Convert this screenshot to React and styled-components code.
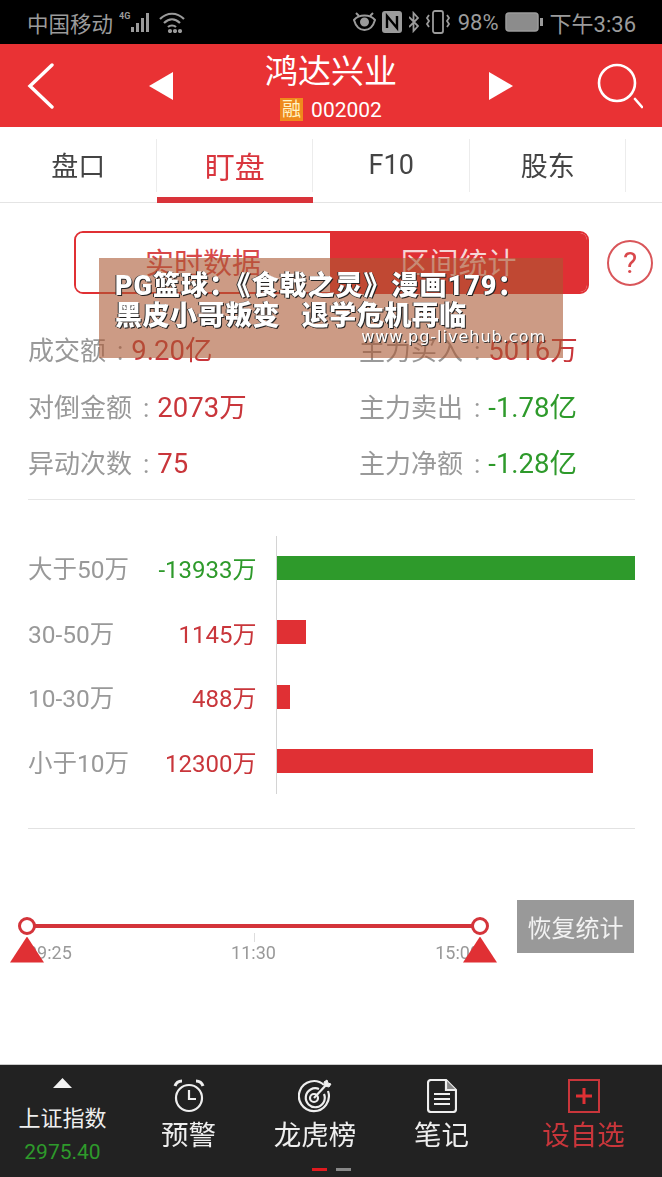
import React from 'react';
import styled, {createGlobalStyle} from 'styled-components';

const RED = '#e93234';
const BAR_RED = '#e03034';
const GREEN = '#2e9a2b';
const GREY = '#999';

const GlobalStyle = createGlobalStyle`
  html, body {
    margin: 0;
    padding: 0;
    background: #fff;
  }
  * {
    box-sizing: border-box;
  }
  body {
    font-family: Roboto, "Noto Sans CJK SC", sans-serif;
  }
`;

const Page = styled.div`
  position: relative;
  width: 662px;
  height: 1177px;
  overflow: hidden;
  display: flex;
  flex-direction: column;
  filter: blur(0.5px);
`;

const StatusBar = styled.div`
  height: 44px;
  background: #000;
  color: #9b9b9b;
  display: flex;
  align-items: center;
  justify-content: space-between;
  padding: 0 26px 0 27px;
  font-size: 21.5px;
`;

const StatusGroup = styled.div`
  display: flex;
  align-items: center;
  font-size: ${props => props.$size || 21.5}px;
  gap: ${props => props.$gap || 6}px;
`;

const Header = styled.div`
  height: 83px;
  background: ${RED};
  color: #fff;
  display: flex;
  align-items: center;
  justify-content: space-between;
  padding: 0 19px 0 27px;
`;

const HeaderMiddle = styled.div`
  display: flex;
  align-items: center;
  justify-content: space-between;
  width: 364px;
  margin-left: 11px;
`;

const TitleBlock = styled.div`
  display: flex;
  flex-direction: column;
  align-items: center;
`;

const Title = styled.div`
  font-size: 33px;
  line-height: 44px;
  margin-top: 2px;
`;

const CodeRow = styled.div`
  display: flex;
  align-items: center;
  gap: 8px;
  font-size: 21px;
  line-height: 28px;
  margin-top: 2px;
`;

const Badge = styled.span`
  width: 23px;
  height: 23px;
  background: #ef8a1c;
  color: #fff3c4;
  font-size: 19px;
  line-height: 23px;
  text-align: center;
`;

const Tabs = styled.div`
  height: 76px;
  display: flex;
  border-bottom: 1px solid #e4e4e4;
  padding-right: 36px;
`;

const Tab = styled.div`
  position: relative;
  width: 156.5px;
  height: 75px;
  display: flex;
  align-items: center;
  justify-content: center;
  font-size: ${props => (props.$active ? 30 : 27)}px;
  color: ${props => (props.$active ? '#d9363e' : '#444')};
  &::before {
    content: '';
    position: absolute;
    right: 0;
    top: 12px;
    bottom: 10px;
    width: 1px;
    background: #ececec;
  }
  ${props => props.$active && `
    &::after {
      content: '';
      position: absolute;
      left: 0;
      right: 0;
      bottom: -1px;
      height: 6px;
      background: #d9333a;
    }
  `}
`;

const ModeRow = styled.div`
  display: flex;
  align-items: center;
  padding: 28px 9px 0 74px;
  gap: 18px;
`;

const Toggle = styled.div`
  width: 515px;
  height: 63px;
  display: flex;
  border: 2px solid ${BAR_RED};
  border-radius: 9px;
  overflow: hidden;
`;

const ToggleItem = styled.div`
  flex: ${props => (props.$active ? 1 : '0 0 254px')};
  display: flex;
  align-items: center;
  justify-content: center;
  padding-bottom: 3px;
  font-size: 29px;
  background: ${props => (props.$active ? BAR_RED : '#fff')};
  color: ${props => (props.$active ? '#f6d5d5' : '#d8484a')};
`;

const Help = styled.div`
  width: 46px;
  height: 46px;
  border: 2px solid #d9565a;
  border-radius: 50%;
  color: #d9484c;
  font-size: 30px;
  line-height: 42px;
  text-align: center;
`;

const Stats = styled.div`
  margin: 26px 27px 0 28px;
  padding-bottom: 9px;
  border-bottom: 1px solid #e6e6e6;
`;

const StatRow = styled.div`
  display: grid;
  grid-template-columns: 331px 1fr;
  height: 56.5px;
  align-items: center;
`;

const Stat = styled.div`
  font-size: 26px;
  color: ${GREY};
  white-space: nowrap;
`;

const Colon = styled.span`
  margin: 0 8px 0 11px;
`;

const StatValue = styled.span`
  font-size: 27.5px;
  color: ${props => (props.$down ? GREEN : '#c9363b')};
`;

const Chart = styled.div`
  margin: 36px 27px 0 28px;
  padding-bottom: 34px;
  border-bottom: 1px solid #e2e2e2;
`;

const ChartRow = styled.div`
  height: 64.5px;
  display: flex;
  align-items: center;
`;

const ChartLabel = styled.div`
  width: 110px;
  font-size: 24.5px;
  color: ${GREY};
  white-space: nowrap;
`;

const ChartValue = styled.div`
  width: 118.5px;
  text-align: right;
  font-size: 24px;
  color: ${props => (props.$down ? GREEN : '#c9363b')};
  white-space: nowrap;
`;

const Track = styled.div`
  flex: 1;
  align-self: stretch;
  margin-left: 19.5px;
  border-left: 1px solid #d4d4d4;
  display: flex;
  align-items: center;
`;

const Bar = styled.div`
  height: 24px;
  background: ${props => (props.$down ? GREEN : BAR_RED)};
`;

const RangeRow = styled.div`
  display: flex;
  align-items: flex-start;
  margin-top: 71px;
  padding-left: 27px;
`;

const Range = styled.div`
  position: relative;
  width: 453px;
  height: 65px;
  margin-right: 37px;
`;

const RangeLine = styled.div`
  position: absolute;
  left: 0;
  right: 0;
  top: 24px;
  height: 4px;
  background: #d4343a;
`;

const RangeTick = styled.div`
  position: absolute;
  left: 227px;
  top: 33px;
  width: 1px;
  height: 9px;
  background: #ddd;
`;

const Knob = styled.div`
  position: absolute;
  top: 17px;
  ${props => (props.$right ? 'right: -9px;' : 'left: -9px;')}
  width: 18px;
  height: 18px;
  border: 3px solid #d4343a;
  border-radius: 50%;
  background: #fff;
`;

const Handle = styled.div`
  position: absolute;
  top: 37px;
  ${props => (props.$right ? 'right: -17px;' : 'left: -17px;')}
  width: 34px;
  height: 26px;
  background: ${BAR_RED};
  clip-path: polygon(50% 0, 100% 100%, 0 100%);
`;

const RangeTimes = styled.div`
  position: absolute;
  left: 0;
  right: 0;
  top: 41px;
  display: flex;
  justify-content: space-between;
  font-size: 18px;
  line-height: 24px;
  color: ${GREY};
`;

const RestoreButton = styled.div`
  width: 117px;
  height: 53px;
  background: #999;
  color: #f2f2f2;
  font-size: 24px;
  display: flex;
  align-items: center;
  justify-content: center;
  white-space: nowrap;
`;

const Spacer = styled.div`
  flex: 1;
`;

const BottomBar = styled.div`
  position: relative;
  height: 113px;
  background: #222;
  border-top: 1px solid #ccc;
  display: flex;
`;

const IndexItem = styled.div`
  width: 125px;
  display: flex;
  flex-direction: column;
  align-items: center;
  color: #eee;
`;

const IndexArrow = styled.div`
  width: 19px;
  height: 10px;
  margin-top: 13px;
  background: #f2f2f2;
  clip-path: polygon(50% 0, 100% 100%, 0 100%);
`;

const IndexName = styled.div`
  font-size: 22px;
  line-height: 30px;
  margin-top: 16px;
`;

const IndexValue = styled.div`
  font-size: 21px;
  line-height: 28px;
  margin-top: 4px;
  color: ${GREEN};
`;

const NavItem = styled.div`
  width: ${props => props.$width}px;
  display: flex;
  flex-direction: column;
  align-items: center;
  padding-top: 14px;
  color: ${props => (props.$accent ? '#c9363b' : '#eee')};
  font-size: 27.5px;
  line-height: 38px;
  gap: 4px;
`;

const Pager = styled.div`
  position: absolute;
  left: 312px;
  bottom: 6px;
  display: flex;
  gap: 9px;
`;

const PagerDot = styled.div`
  width: 15px;
  height: 3px;
  background: ${props => (props.$active ? '#e01a1f' : '#888')};
`;

const Notice = styled.div`
  position: absolute;
  left: 99px;
  top: 258px;
  width: 464px;
  height: 100px;
  background: rgba(170, 88, 52, 0.6);
  padding: 13px 0 0 16px;
  color: #fff;
  font-weight: 900;
  font-size: 27px;
  line-height: 30px;
  text-shadow: 1px 1px 0 #222, -1px 0 0 #333;
`;

const NoticeLine = styled.div`
  white-space: pre;
  letter-spacing: ${props => props.$spacing || 0}px;
`;

const NoticeUrl = styled.div`
  position: absolute;
  right: 17px;
  bottom: 11px;
  font-family: "DejaVu Sans", sans-serif;
  font-weight: 400;
  font-size: 16px;
  line-height: 20px;
  letter-spacing: 1px;
  text-shadow: 1px 1px 0 #333;
`;

const SignalIcon = () => (
  <svg width="34" height="22" viewBox="0 0 34 22" fill="#9b9b9b">
    <text x="0" y="8" fontSize="9" fontFamily="Roboto" fontWeight="700">4G</text>
    <rect x="12" y="16" width="3" height="5" />
    <rect x="17" y="12" width="3" height="9" />
    <rect x="22" y="7" width="3" height="14" />
    <rect x="27" y="2" width="3" height="19" />
  </svg>
);

const WifiIcon = () => (
  <svg width="26" height="22" viewBox="0 0 26 22" fill="none" stroke="#9b9b9b" strokeWidth="2.2">
    <path d="M1 8 C8 1 18 1 25 8" />
    <path d="M5 12 C10 7 16 7 21 12" />
    <path d="M9 16 C11 14 15 14 17 16" />
    <circle cx="11" cy="20" r="1" fill="#9b9b9b" />
    <circle cx="16" cy="20" r="1" fill="#9b9b9b" />
    <circle cx="21" cy="20" r="1" fill="#9b9b9b" />
  </svg>
);

const EyeIcon = () => (
  <svg width="23" height="20" viewBox="0 0 23 20" fill="none" stroke="#9b9b9b" strokeWidth="2">
    <path d="M1 8 C6 2 17 2 22 8 C20 15 16 18 11.5 18 C7 18 3 15 1 8 Z" />
    <circle cx="11.5" cy="10" r="3.5" fill="#9b9b9b" />
    <path d="M3 1 L6 4 M20 1 L17 4" />
  </svg>
);

const NfcIcon = () => (
  <svg width="20" height="22" viewBox="0 0 20 22">
    <rect x="0" y="0" width="20" height="22" rx="3" fill="#9b9b9b" />
    <path d="M5 17 V5 L15 17 V5" fill="none" stroke="#000" strokeWidth="2.4" />
  </svg>
);

const BluetoothIcon = () => (
  <svg width="10" height="22" viewBox="0 0 10 22" fill="none" stroke="#9b9b9b" strokeWidth="1.8">
    <path d="M0 6 L9 15 L4.5 20 V2 L9 7 L0 16" />
  </svg>
);

const VibrateIcon = () => (
  <svg width="26" height="24" viewBox="0 0 26 24" fill="none" stroke="#9b9b9b" strokeWidth="1.8">
    <rect x="8" y="1" width="10" height="22" rx="2" />
    <path d="M4 5 L2 8 L4 11 L2 14 L4 17 M22 5 L24 8 L22 11 L24 14 L22 17" />
  </svg>
);

const BatteryIcon = () => (
  <svg width="38" height="20" viewBox="0 0 38 20">
    <rect x="1" y="1" width="32" height="18" rx="3" fill="#8c8c8c" stroke="#9b9b9b" strokeWidth="1.5" />
    <rect x="35" y="6" width="3" height="8" fill="#9b9b9b" />
  </svg>
);

const BackIcon = () => (
  <svg width="27" height="46" viewBox="0 0 27 46" fill="none" stroke="#fff" strokeWidth="3.4" strokeLinecap="round">
    <path d="M25 2 L3 23 L25 44" />
  </svg>
);

const ArrowIcon = ({right}) => (
  <svg width="24" height="28" viewBox="0 0 24 28" fill="#fff">
    <path d={right ? 'M0 0 L24 14 L0 28 Z' : 'M24 0 L0 14 L24 28 Z'} />
  </svg>
);

const SearchIcon = () => (
  <svg width="46" height="46" viewBox="0 0 46 46" fill="none" stroke="#fff" strokeWidth="2.6">
    <circle cx="20" cy="20" r="18" />
    <path d="M38 36 L45 44" strokeLinecap="round" />
  </svg>
);

const AlarmIcon = () => (
  <svg width="32" height="34" viewBox="0 0 32 34" fill="none" stroke="#eee" strokeWidth="2.2">
    <circle cx="16" cy="19" r="13" />
    <path d="M16 11 V20 H23" />
    <path d="M2 7 C3 4 6 2 9 2 M30 7 C29 4 26 2 23 2" strokeWidth="3" />
  </svg>
);

const TargetIcon = () => (
  <svg width="34" height="34" viewBox="0 0 34 34" fill="none" stroke="#eee" strokeWidth="2.2">
    <path d="M26 6 A15 15 0 1 0 30 12" />
    <path d="M21 10 A9.5 9.5 0 1 0 26 15" />
    <circle cx="16" cy="19" r="4" />
    <path d="M16 19 L29 5" />
    <path d="M26 3 L27 7 L31 8 L33 5 L30 4 L29 1 Z" fill="#eee" strokeWidth="1" />
  </svg>
);

const NoteIcon = () => (
  <svg width="30" height="34" viewBox="0 0 30 34" fill="none" stroke="#eee" strokeWidth="2.2">
    <path d="M4 1 H19 L29 11 V30 C29 32 28 33 26 33 H4 C2 33 1 32 1 30 V4 C1 2 2 1 4 1 Z" />
    <path d="M19 1 V11 H29" fill="#888" />
    <path d="M7 15 H23 M7 20 H23 M7 25 H23" />
  </svg>
);

const AddIcon = () => (
  <svg width="32" height="34" viewBox="0 0 32 34" fill="none" stroke="#c9363b">
    <rect x="1" y="1" width="30" height="32" strokeWidth="2" />
    <path d="M16 9 V25 M8 17 H24" strokeWidth="3" stroke="#e03034" />
  </svg>
);

const stats = [
  [
    {label: '成交额', value: '9.20亿'},
    {label: '主力买入', value: '5016万'},
  ],
  [
    {label: '对倒金额', value: '2073万'},
    {label: '主力卖出', value: '-1.78亿', down: true},
  ],
  [
    {label: '异动次数', value: '75'},
    {label: '主力净额', value: '-1.28亿', down: true},
  ],
];

const flows = [
  {label: '大于50万', amount: -13933},
  {label: '30-50万', amount: 1145},
  {label: '10-30万', amount: 488},
  {label: '小于10万', amount: 12300},
];

const navItems = [
  {label: '预警', width: 127, icon: <AlarmIcon />},
  {label: '龙虎榜', width: 126, icon: <TargetIcon />},
  {label: '笔记', width: 127, icon: <NoteIcon />},
  {label: '设自选', width: 157, icon: <AddIcon />, accent: true},
];

const MAX_AMOUNT = 13933;
const MAX_BAR = 358;

const App = () => {
  return (
    <Page>
      <GlobalStyle />
      <StatusBar>
        <StatusGroup>
          <span>中国移动</span>
          <SignalIcon />
          <WifiIcon />
        </StatusGroup>
        <StatusGroup $gap={6.5} $size={22}>
          <EyeIcon />
          <NfcIcon />
          <BluetoothIcon />
          <VibrateIcon />
          <span>98%</span>
          <BatteryIcon />
          <span>下午3:36</span>
        </StatusGroup>
      </StatusBar>

      <Header>
        <BackIcon />
        <HeaderMiddle>
          <ArrowIcon />
          <TitleBlock>
            <Title>鸿达兴业</Title>
            <CodeRow>
              <Badge>融</Badge>
              002002
            </CodeRow>
          </TitleBlock>
          <ArrowIcon right />
        </HeaderMiddle>
        <SearchIcon />
      </Header>

      <Tabs>
        <Tab>盘口</Tab>
        <Tab $active>盯盘</Tab>
        <Tab>F10</Tab>
        <Tab>股东</Tab>
      </Tabs>

      <ModeRow>
        <Toggle>
          <ToggleItem>实时数据</ToggleItem>
          <ToggleItem $active>区间统计</ToggleItem>
        </Toggle>
        <Help>?</Help>
      </ModeRow>

      <Stats>
        {stats.map((row, i) => (
          <StatRow key={i}>
            {row.map(stat => (
              <Stat key={stat.label}>
                {stat.label}<Colon>:</Colon><StatValue $down={stat.down}>{stat.value}</StatValue>
              </Stat>
            ))}
          </StatRow>
        ))}
      </Stats>

      <Chart>
        {flows.map(flow => (
          <ChartRow key={flow.label}>
            <ChartLabel>{flow.label}</ChartLabel>
            <ChartValue $down={flow.amount < 0}>{flow.amount}万</ChartValue>
            <Track>
              <Bar
                $down={flow.amount < 0}
                style={{width: (Math.abs(flow.amount) / MAX_AMOUNT) * MAX_BAR}}
              />
            </Track>
          </ChartRow>
        ))}
      </Chart>

      <RangeRow>
        <Range>
          <RangeTimes>
            <span>09:25</span>
            <span>11:30</span>
            <span>15:00</span>
          </RangeTimes>
          <RangeTick />
          <RangeLine />
          <Knob />
          <Knob $right />
          <Handle />
          <Handle $right />
        </Range>
        <RestoreButton>恢复统计</RestoreButton>
      </RangeRow>

      <Spacer />

      <BottomBar>
        <IndexItem>
          <IndexArrow />
          <IndexName>上证指数</IndexName>
          <IndexValue>2975.40</IndexValue>
        </IndexItem>
        {navItems.map(item => (
          <NavItem key={item.label} $width={item.width} $accent={item.accent}>
            {item.icon}
            {item.label}
          </NavItem>
        ))}
        <Pager>
          <PagerDot $active />
          <PagerDot />
        </Pager>
      </BottomBar>

      <Notice>
        <NoticeLine $spacing={1}>PG篮球：《食戟之灵》漫画179：</NoticeLine>
        <NoticeLine $spacing={0.5}>黑皮小哥叛变   退学危机再临</NoticeLine>
        <NoticeUrl>www.pg-livehub.com</NoticeUrl>
      </Notice>
    </Page>
  );
};

export default App;
